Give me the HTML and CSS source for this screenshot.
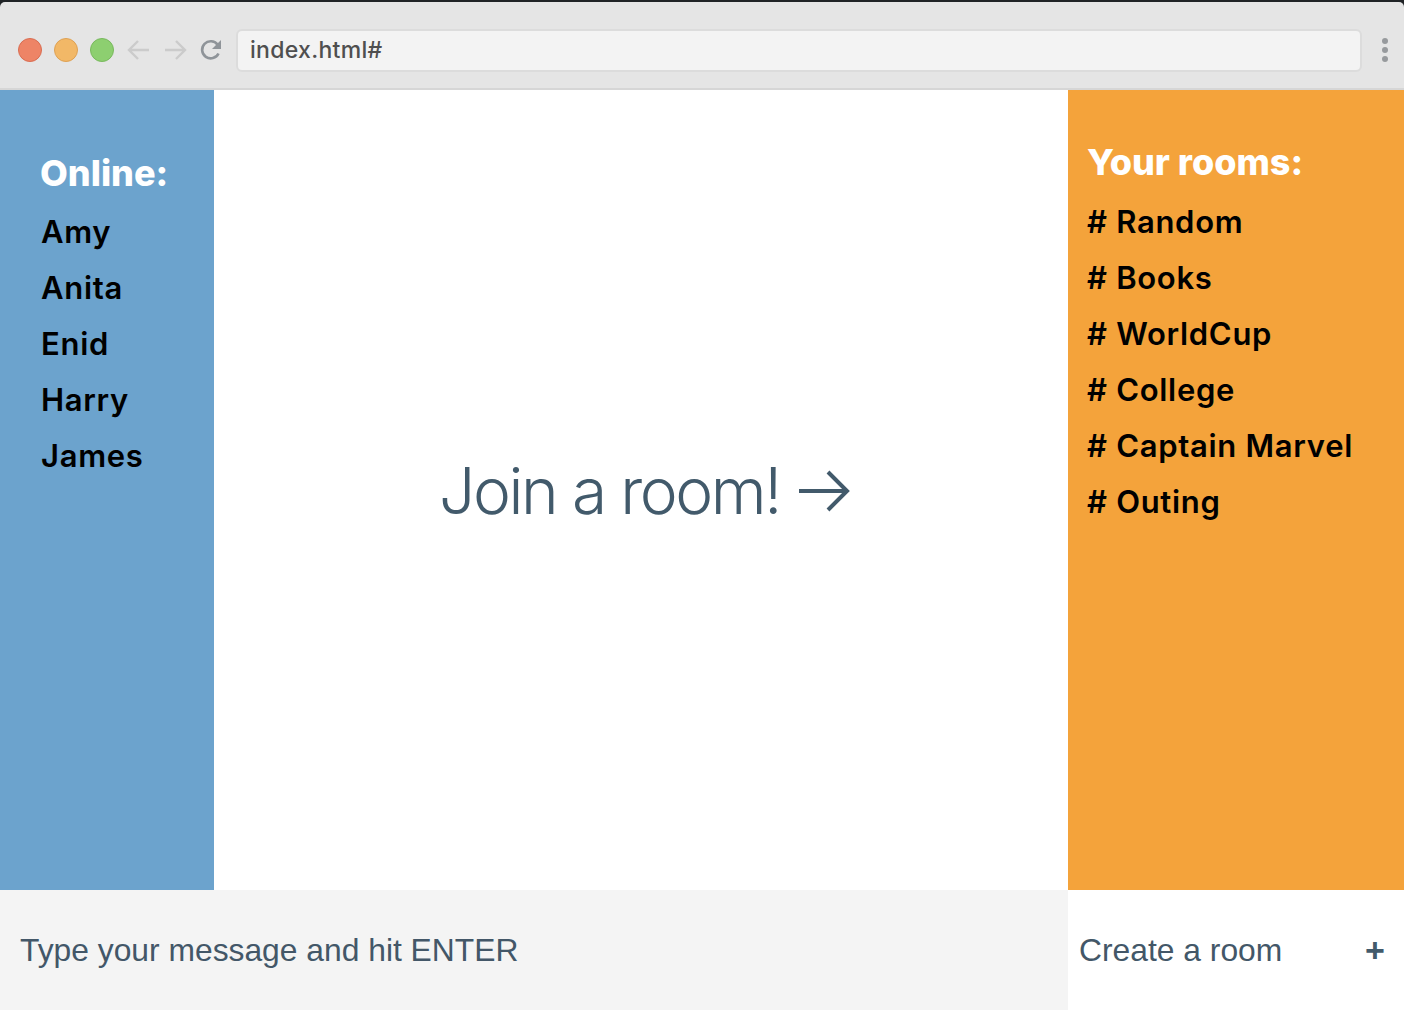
FILE: index.html
```html
<!DOCTYPE html>
<html lang="en">
<head>
<meta charset="utf-8">
<title>Chat</title>
<link rel="stylesheet" href="styles.css">
</head>
<body>
<div class="window">
  <header class="chrome">
    <div class="lights">
      <span class="light red"></span>
      <span class="light yellow"></span>
      <span class="light green"></span>
    </div>
    <div class="nav">
      <svg class="navicon" width="26" height="26" viewBox="0 0 26 26"><path d="M23 13H3M12 4l-9 9 9 9" fill="none" stroke="#cbcbcb" stroke-width="2.4"/></svg>
      <svg class="navicon" width="26" height="26" viewBox="0 0 26 26"><path d="M3 13h20M14 4l9 9-9 9" fill="none" stroke="#cbcbcb" stroke-width="2.4"/></svg>
      <svg class="navicon" width="26" height="26" viewBox="0 0 26 26"><path d="M20.5 16.5A8.6 8.6 0 1 1 19.6 7.6" fill="none" stroke="#8f9499" stroke-width="2.6"/><path d="M23 3v9h-9z" fill="#8f9499"/></svg>
    </div>
    <div class="url">index.html#</div>
    <div class="kebab"><span></span><span></span><span></span></div>
  </header>
  <main class="app">
    <aside class="online">
      <h2 class="side-title">Online:</h2>
      <ul class="list">
        <li>Amy</li>
        <li>Anita</li>
        <li>Enid</li>
        <li>Harry</li>
        <li>James</li>
      </ul>
    </aside>
    <section class="messages">
      <div class="join">Join a room!
        <svg class="arrow" width="54" height="44" viewBox="0 0 54 44"><path d="M1 22h48M30 3l19 19-19 19" fill="none" stroke="#425a6b" stroke-width="4"/></svg>
      </div>
    </section>
    <aside class="rooms">
      <h2 class="side-title">Your rooms:</h2>
      <ul class="list">
        <li># Random</li>
        <li># Books</li>
        <li># WorldCup</li>
        <li># College</li>
        <li># Captain Marvel</li>
        <li># Outing</li>
      </ul>
    </aside>
    <form class="send">
      <input class="send-input" type="text" placeholder="Type your message and hit ENTER">
    </form>
    <form class="create">
      <input class="create-input" type="text" placeholder="Create a room">
      <button class="create-btn" type="button">+</button>
    </form>
  </main>
</div>
</body>
</html>
```

FILE: styles.css
```css
* { box-sizing: border-box; }
html, body { margin: 0; padding: 0; }
body {
  width: 1404px;
  height: 1010px;
  overflow: hidden;
  background: #202326;
  font-family: Inter, "Noto Sans", sans-serif;
}
.window {
  margin-top: 2px;
  height: 1008px;
  background: #e5e5e5;
  border-radius: 5px 5px 0 0;
  overflow: hidden;
  display: flex;
  flex-direction: column;
}
.chrome {
  height: 88px;
  flex: none;
  display: flex;
  align-items: center;
  padding: 10px 0 0 18px;
  border-bottom: 2px solid #d6d6d6;
}
.lights { display: flex; gap: 12px; }
.light {
  width: 24px; height: 24px; border-radius: 50%;
  display: block;
}
.red { background: #ee8466; border: 1px solid #d96d52; }
.yellow { background: #f2b867; border: 1px solid #dea154; }
.green { background: #8dcf70; border: 1px solid #79b95e; }
.nav { display: flex; gap: 10px; margin-left: 12px; }
.navicon { display: block; }
.url {
  margin-left: 12px;
  width: 1126px;
  height: 43px;
  background: #f3f3f3;
  border: 2px solid #dcdcdc;
  border-radius: 6px;
  padding-left: 12px;
  display: flex;
  align-items: center;
  font-size: 23px;
  font-weight: 500;
  color: #4f4f4f;
  letter-spacing: 0.3px;
}
.kebab {
  margin-left: 20px;
  display: flex;
  flex-direction: column;
  gap: 3px;
}
.kebab span {
  width: 6px; height: 6px; border-radius: 50%;
  background: #979a9d;
  display: block;
}
.app {
  flex: 1;
  display: grid;
  grid-template-columns: 214px 854px 336px;
  grid-template-rows: 800px 120px;
  background: #fff;
}
.online {
  background: #6ca3cd;
  padding: 61px 0 0 40px;
}
.rooms {
  background: #f4a33b;
  padding: 50px 0 0 19px;
}
.side-title {
  margin: 0 0 9px;
  font-size: 36px;
  line-height: 44px;
  font-weight: 800;
  letter-spacing: 0;
  color: #fff;
}
.rooms .side-title { margin-bottom: 10px; }
.list {
  list-style: none;
  margin: 0;
  padding: 0;
}
.list li {
  font-size: 31px;
  line-height: 56px;
  font-weight: 600;
  color: #000;
  letter-spacing: 0.7px;
}
.online .list li { padding-left: 1px; }
.messages {
  display: flex;
  align-items: center;
  justify-content: center;
}
.join {
  display: flex;
  align-items: center;
  gap: 18px;
  font-size: 64px;
  font-weight: 300;
  letter-spacing: -2.4px;
  color: #425a6b;
  padding-left: 9px;
}
.arrow { display: block; margin-top: 2px; }
.send {
  grid-column: 1 / 3;
  margin: 0;
  background: #f4f4f4;
  display: flex;
}
.send-input, .create-input {
  flex: 1;
  border: none;
  outline: none;
  background: transparent;
  font-family: "Liberation Sans", Arial, sans-serif;
  font-size: 31.8px;
  color: #425566;
  min-width: 0;
}
.send-input { padding: 0 0 0 20px; }
.send-input::placeholder, .create-input::placeholder {
  color: #435768;
  opacity: 1;
}
.create {
  margin: 0;
  background: #fff;
  display: flex;
  align-items: stretch;
}
.create-input { padding: 0 0 0 11px; }
.create-btn {
  width: 58px;
  border: none;
  background: transparent;
  font-family: "Liberation Sans", Arial, sans-serif;
  font-size: 34px;
  font-weight: 700;
  color: #425a6b;
  padding: 0;
  cursor: pointer;
}
```
